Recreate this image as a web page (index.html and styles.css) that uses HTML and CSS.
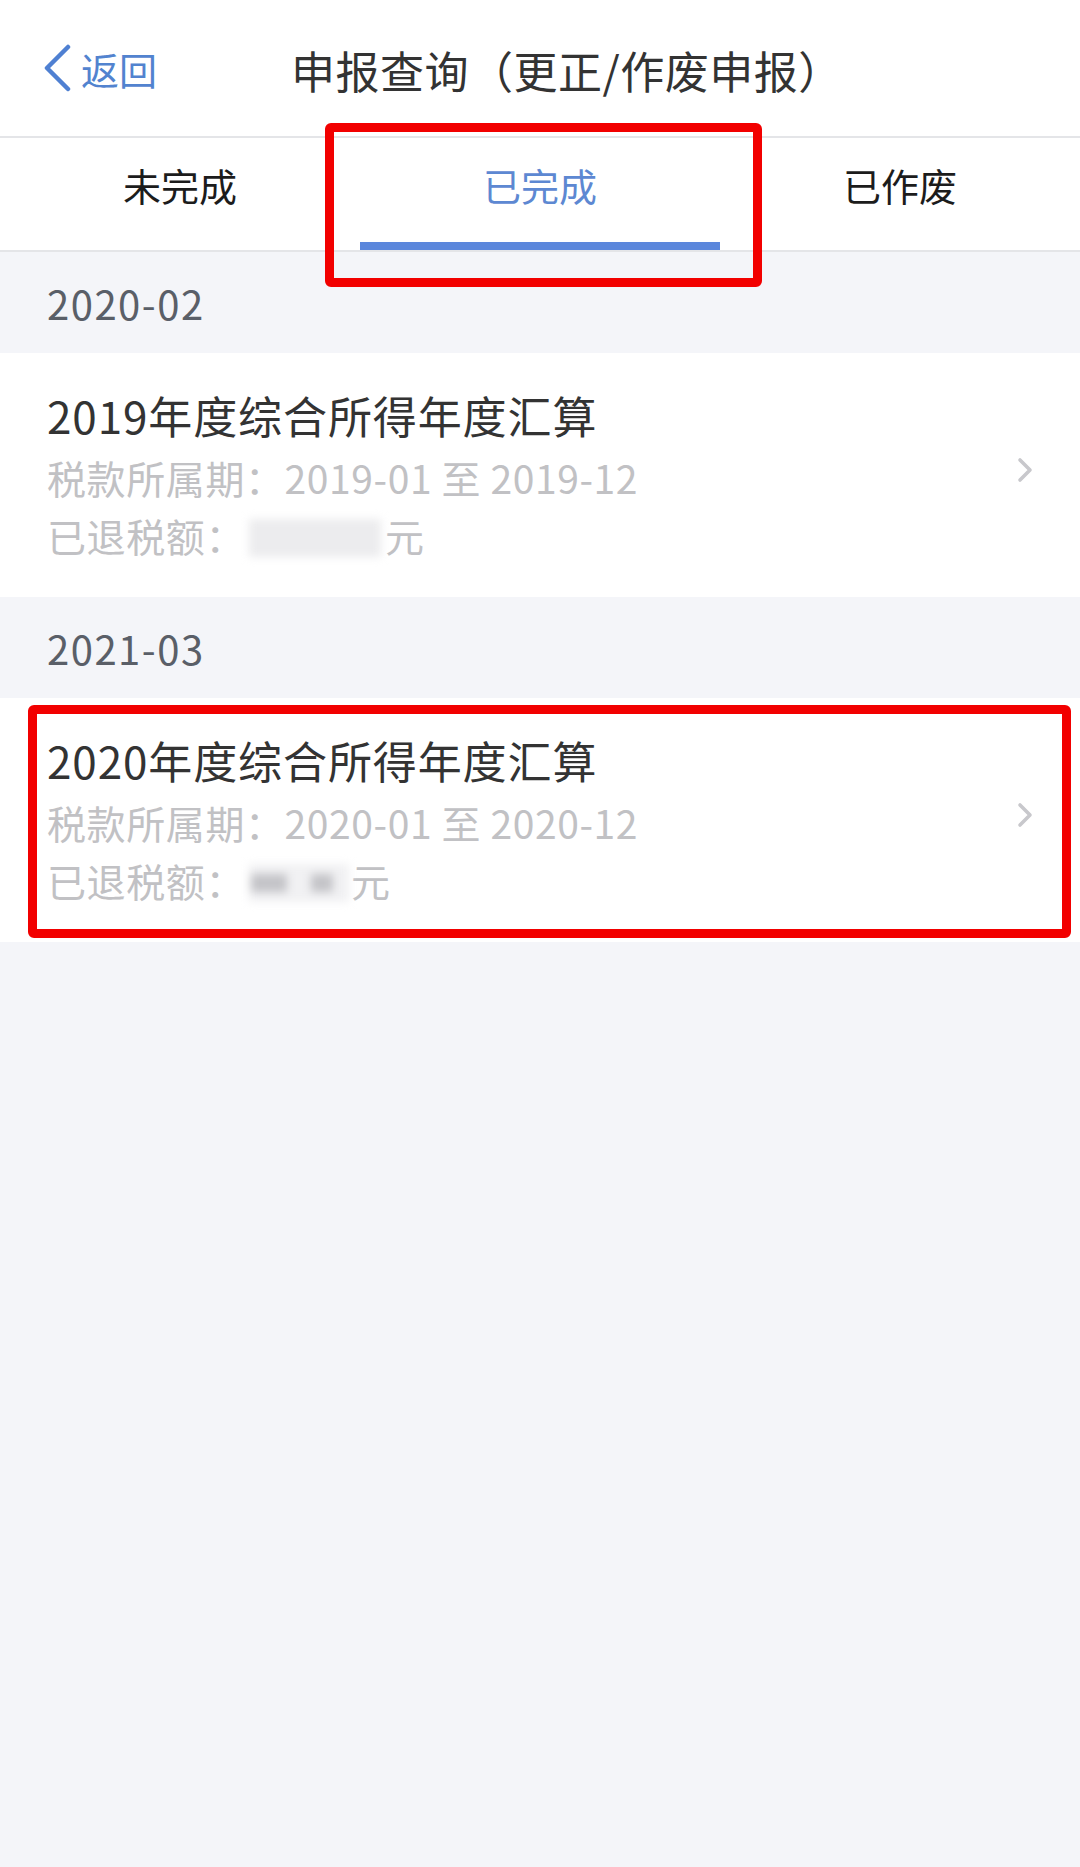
FILE: index.html
```html
<!DOCTYPE html>
<html lang="zh-CN">
<head>
<meta charset="utf-8">
<title>申报查询</title>
<link rel="stylesheet" href="styles.css">
</head>
<body>
<div class="page">
  <header class="nav">
    <div class="back">
      <svg class="back-icon" width="30" height="48" viewBox="0 0 30 48"><path d="M25 3 L4 24 L25 45" fill="none" stroke="#4f80d2" stroke-width="4.5" stroke-linecap="round" stroke-linejoin="round"/></svg>
      <span class="back-text">返回</span>
    </div>
    <h1 class="title">申报查询（更正/作废申报）</h1>
  </header>

  <nav class="tabs">
    <div class="tab">未完成</div>
    <div class="tab active">已完成</div>
    <div class="tab">已作废</div>
  </nav>

  <div class="section">2020-02</div>
  <div class="card">
    <div class="card-body">
      <div class="card-title">2019年度综合所得年度汇算</div>
      <div class="card-line">税款所属期：2019-01 至 2019-12</div>
      <div class="card-line">已退税额：<span class="blur blur-a"></span>元</div>
    </div>
    <svg class="chev" width="18" height="26" viewBox="0 0 18 26"><path d="M4 3 L14 13 L4 23" fill="none" stroke="#c8c8cc" stroke-width="3.6" stroke-linecap="round" stroke-linejoin="round"/></svg>
  </div>

  <div class="section">2021-03</div>
  <div class="card">
    <div class="card-body">
      <div class="card-title">2020年度综合所得年度汇算</div>
      <div class="card-line">税款所属期：2020-01 至 2020-12</div>
      <div class="card-line">已退税额：<span class="blur blur-b"><i class="blob b1"></i><i class="blob b2"></i></span>元</div>
    </div>
    <svg class="chev" width="18" height="26" viewBox="0 0 18 26"><path d="M4 3 L14 13 L4 23" fill="none" stroke="#c8c8cc" stroke-width="3.6" stroke-linecap="round" stroke-linejoin="round"/></svg>
  </div>

  <div class="mark mark-tab"></div>
  <div class="mark mark-card"></div>
</div>
</body>
</html>
```

FILE: styles.css
```css
* { box-sizing: border-box; margin: 0; padding: 0; }
html, body { background: #f4f5f9; }
body {
  font-family: "Noto Sans CJK SC", "Noto Sans", sans-serif;
  width: 1080px;
  min-height: 1867px;
}
.page { position: relative; width: 1080px; min-height: 1867px; background: #f4f5f9; }

.nav {
  height: 138px;
  background: #fff;
  border-bottom: 2px solid #e4e5e8;
  display: flex;
  align-items: center;
  padding-left: 43px;
  padding-top: 3px;
}
.back { display: flex; align-items: center; gap: 8px; margin-top: -4px; }
.back-icon { display: block; }
.back-text { font-size: 38px; color: #5283cf; line-height: 1; padding-top: 2px; }
.title {
  font-weight: 400;
  font-size: 44px;
  color: #333;
  margin-left: 134px;
  line-height: 1;
  letter-spacing: 0.5px;
}

.tabs {
  height: 114px;
  background: #fff;
  border-bottom: 2px solid #e4e5e8;
  display: grid;
  grid-template-columns: 1fr 1fr 1fr;
}
.tab {
  font-size: 38px;
  color: #1c1c1c;
  display: flex;
  align-items: center;
  justify-content: center;
  padding-bottom: 20px;
  position: relative;
}
.tab.active { color: #5d88d2; }
.tab.active::after {
  content: "";
  position: absolute;
  left: 0; right: 0; bottom: 0;
  height: 8px;
  background: #5b87dc;
}

.section {
  height: 101px;
  display: flex;
  align-items: center;
  padding-left: 47px;
  font-size: 40px;
  letter-spacing: 1.5px;
  color: #5a5f68;
  background: #f4f5f9;
}

.card {
  height: 244px;
  background: #fff;
  display: flex;
  align-items: center;
  padding: 0 46px 0 47px;
}
.card-body { flex: 1; padding-top: 4px; }
.card-title { font-size: 44px; line-height: 50px; margin-bottom: 8px; color: #333; letter-spacing: 0.9px; }
.card-line { font-size: 39px; line-height: 58px; color: #c1c1c4; letter-spacing: 0.6px; }
.chev { display: block; margin-top: -10px; }

.blur {
  display: inline-block;
  vertical-align: middle;
  height: 38px;
  margin-top: -6px;
  background: #ececee;
  filter: blur(4px);
  position: relative;
}
.blur-a { width: 132px; margin-left: 4px; margin-right: 4px; }
.blur-b { width: 100px; margin-left: 4px; margin-right: 2px; background: #f1f1f3; }
.blob { position: absolute; top: 10px; height: 18px; background: #c4c4c8; }
.b1 { left: 2px; width: 36px; }
.b2 { left: 62px; width: 22px; }

.mark {
  position: absolute;
  border: 9px solid #f20000;
  border-radius: 6px;
  pointer-events: none;
}
.mark-tab { left: 325px; top: 123px; width: 437px; height: 164px; }
.mark-card { left: 28px; top: 705px; width: 1043px; height: 233px; }
```
